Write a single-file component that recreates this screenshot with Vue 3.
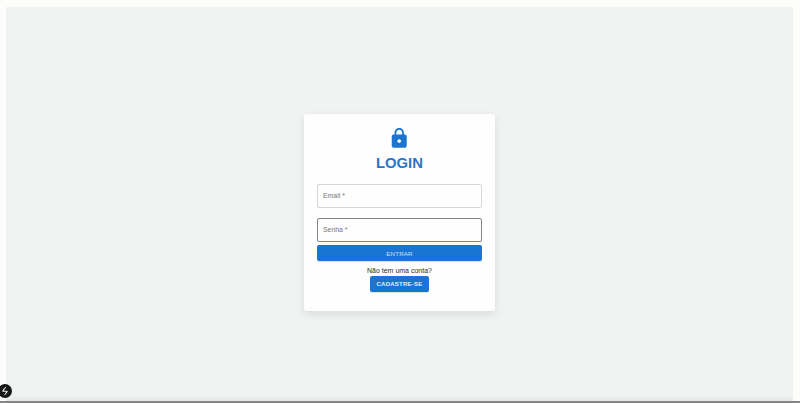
<script setup>
import { ref } from 'vue'

const email = ref('')
const password = ref('')
</script>

<template>
  <div class="page">
    <main class="screen">
      <form class="card" @submit.prevent>
        <svg class="lock" viewBox="0 0 24 24" aria-hidden="true">
          <path d="M18 8h-1V6c0-2.760-2.240-5-5-5S7 3.240 7 6v2H6c-1.100 0-2 .9-2 2v10c0 1.100.9 2 2 2h12c1.100 0 2-.9 2-2V10c0-1.100-.9-2-2-2zm-6 9c-1.100 0-2-.9-2-2s.9-2 2-2 2 .9 2 2-.9 2-2 2zm3.100-9H8.900V6c0-1.710 1.390-3.100 3.100-3.100s3.100 1.390 3.100 3.100v2z" />
        </svg>
        <h1>LOGIN</h1>
        <input v-model="email" class="field" type="text" placeholder="Email *" />
        <input v-model="password" class="field active" type="password" placeholder="Senha *" />
        <button class="btn submit" type="submit">ENTRAR</button>
        <p>Não tem uma conta?</p>
        <button class="btn register" type="button">CADASTRE-SE</button>
      </form>
    </main>
    <footer class="edge"></footer>
    <div class="badge">
      <svg viewBox="0 0 14 14" aria-hidden="true">
        <path d="M7.800 3 4.800 7.300h4.400L6.400 11.200M4.800 7.300l1-2.600M9.200 7.300 8.300 9.400" />
      </svg>
    </div>
  </div>
</template>

<style>
body {
  margin: 0;
  overflow: hidden;
}
</style>

<style scoped>
.page {
  box-sizing: border-box;
  height: 403px;
  display: flex;
  flex-direction: column;
  padding-top: 7px;
  background: #fdfefc;
  font-family: "Liberation Sans", Arial, sans-serif;
  position: relative;
  overflow: hidden;
}
.screen {
  flex: 1;
  margin: 0 7px 0 6px;
  display: flex;
  justify-content: center;
  align-items: flex-start;
  padding-top: 107px;
  background: linear-gradient(to bottom, transparent calc(100% - 6px), #e4e6e4), #f1f3f2;
}
.card {
  box-sizing: border-box;
  width: 191px;
  height: 196.500px;
  padding: 13px 13px 0;
  display: flex;
  flex-direction: column;
  align-items: center;
  background: #fefefe;
  border-radius: 3px;
  box-shadow: 0 3px 8px rgba(0, 0, 0, 0.1);
}
.lock {
  width: 22.500px;
  height: 22.500px;
  fill: #1b74d0;
  flex: none;
}
h1 {
  margin: 5.500px 0 11.500px;
  font-size: 14.800px;
  line-height: 17.500px;
  font-weight: 700;
  color: #2c75c6;
}
.field {
  box-sizing: border-box;
  width: 100%;
  height: 24px;
  flex: none;
  margin: 0 0 10px;
  padding: 0 5px 1px;
  border: 1px solid #d5d7d6;
  border-radius: 2px;
  background: transparent;
  font: 6.900px "Liberation Sans", Arial, sans-serif;
  outline: none;
}
.field::placeholder {
  color: #757575;
  opacity: 1;
}
.field.active {
  border-color: #828383;
  margin-bottom: 3.400px;
}
.btn {
  border: 0;
  padding: 0;
  height: 15.600px;
  flex: none;
  border-radius: 2px;
  background: #1a74d1;
  color: #e4f0fc;
  font: 6.200px/15px "Liberation Sans", Arial, sans-serif;
  letter-spacing: 0.170px;
  box-shadow: 0 1px 1px rgba(0, 0, 0, 0.120);
}
.submit {
  width: 100%;
  color: #c9e0f7;
}
.register {
  width: 59px;
  font-weight: 700;
  font-size: 6.100px;
}
p {
  margin: 5px 0 1px;
  font-size: 7px;
  line-height: 9px;
  color: #2b2b2b;
}
.edge {
  height: 2px;
  background: #858585;
  flex: none;
}
.badge {
  position: absolute;
  left: -2px;
  top: 384px;
  width: 14px;
  height: 14px;
  border-radius: 50%;
  background: #151716;
}
.badge svg {
  display: block;
  width: 14px;
  height: 14px;
  fill: none;
  stroke: #e8e8e8;
  stroke-width: 1;
}
</style>
